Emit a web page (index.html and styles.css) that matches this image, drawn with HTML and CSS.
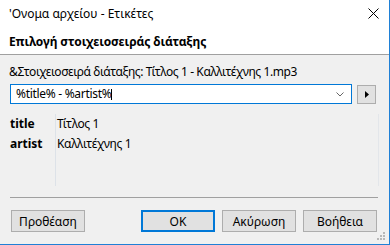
FILE: index.html
```html
<!DOCTYPE html>
<html lang="el">
<head>
    <meta charset="UTF-8">
    <title>Όνομα αρχείου - Ετικέτες</title>
    <link rel="stylesheet" href="styles.css">
</head>
<body>
    <div class="window">
        <div class="titlebar">
            <span class="title">'Ονομα αρχείου - Ετικέτες</span>
            <svg class="close" width="11" height="11" viewBox="0 0 11 11">
                <path d="M0.5 0.5 L10.5 10.5 M10.5 0.5 L0.5 10.5" stroke="#000" stroke-width="1" fill="none"/>
            </svg>
        </div>
        <div class="header">Επιλογή στοιχειοσειράς διάταξης</div>

        <div class="content">
            <div class="label">&amp;Στοιχειοσειρά διάταξης: Τίτλος 1 - Καλλιτέχνης 1.mp3</div>
            <div class="combo-row">
                <div class="combo">
                    <span class="combo-text">%title% - %artist%</span><span class="caret"></span>
                    <svg class="chevron" width="8" height="5" viewBox="0 0 8 5">
                        <path d="M0.5 0.5 L4 4 L7.5 0.5" stroke="#666" stroke-width="1" fill="none"/>
                    </svg>
                </div>
                <button class="arrow-btn">
                    <svg width="4" height="7" viewBox="0 0 4 7"><path d="M0 0 L4 3.5 L0 7 Z" fill="#000"/></svg>
                </button>
            </div>

            <div class="fields">
                <div class="field-names">
                    <div>title</div>
                    <div>artist</div>
                </div>
                <div class="field-values">
                    <div>Τίτλος 1</div>
                    <div>Καλλιτέχνης 1</div>
                </div>
            </div>

            <div class="sep"></div>

            <div class="buttons">
                <button class="btn">Προθέαση</button>
                <div class="btn-group">
                    <button class="btn default">OK</button>
                    <button class="btn">Ακύρωση</button>
                    <button class="btn">Βοήθεια</button>
                </div>
            </div>
        </div>

        <svg class="grip" width="9" height="9" viewBox="0 0 9 9">
            <rect x="6" y="0" width="2" height="2" fill="#b8b8b8"/>
            <rect x="3" y="3" width="2" height="2" fill="#b8b8b8"/>
            <rect x="6" y="3" width="2" height="2" fill="#b8b8b8"/>
            <rect x="0" y="6" width="2" height="2" fill="#b8b8b8"/>
            <rect x="3" y="6" width="2" height="2" fill="#b8b8b8"/>
            <rect x="6" y="6" width="2" height="2" fill="#b8b8b8"/>
        </svg>
    </div>
</body>
</html>
```

FILE: styles.css
```css
body {
    margin: 0;
    padding: 0;
    font-family: 'Noto Sans', 'DejaVu Sans', sans-serif;
    font-size: 12px;
    color: #000;
    background: #f0f0f0;
}

.window {
    position: relative;
    width: 390px;
    height: 245px;
    box-sizing: border-box;
    border-right: 1px solid #1f80d6;
    border-bottom: 1px solid #1f80d6;
    background-color: #f0f0f0;
    display: flex;
    flex-direction: column;
}

.titlebar {
    height: 28px;
    background-color: #fff;
    display: flex;
    align-items: center;
    justify-content: space-between;
    padding: 0 10px 0 9px;
}

.title {
    line-height: 28px;
}

.close {
    display: block;
    margin-top: -1px;
}

.header {
    background-color: #fff;
    font-weight: bold;
    line-height: 16px;
    padding: 6px 9px 4px;
    border-bottom: 1px solid #a0a0a0;
    letter-spacing: -0.1px;
}

.content {
    padding: 9px 0 0 10px;
}

.label {
    line-height: 16px;
    margin-left: -1px;
    letter-spacing: -0.4px;
}

.combo-row {
    display: flex;
    align-items: center;
    margin-top: 4px;
}

.combo {
    width: 342px;
    height: 20px;
    box-sizing: border-box;
    border: 1px solid #0078d7;
    background-color: #fff;
    display: flex;
    align-items: center;
    padding-left: 5px;
}

.combo-text {
    line-height: 16px;
    letter-spacing: -0.3px;
}

.caret {
    width: 1px;
    height: 11px;
    background-color: #000;
}

.chevron {
    margin-left: auto;
    margin-right: 7px;
}

.arrow-btn {
    width: 19px;
    height: 19px;
    margin-left: 5px;
    padding: 0;
    background-color: #e1e1e1;
    border: 1px solid #adadad;
    display: flex;
    align-items: center;
    justify-content: center;
}

.arrow-btn svg {
    display: block;
    margin-left: 1px;
}

.fields {
    display: flex;
    width: 368px;
    height: 72px;
    margin-top: 10px;
    border-right: 1px solid #e3e6ea;
    line-height: 20px;
}

.field-names {
    width: 45px;
    font-weight: bold;
    border-right: 1px solid #dde2e8;
}

.field-values {
    padding-left: 1px;
    letter-spacing: -0.35px;
}

.sep {
    width: 368px;
    height: 1px;
    margin-top: 11px;
    background-color: #a0a0a0;
}

.buttons {
    display: flex;
    justify-content: space-between;
    width: 366px;
    margin-top: 12px;
    margin-left: 1px;
}

.btn-group {
    display: flex;
    gap: 7px;
}

.btn {
    width: 74px;
    height: 22px;
    padding: 0;
    font-family: inherit;
    font-size: 12px;
    color: #000;
    background-color: #e1e1e1;
    border: 1px solid #adadad;
}

.btn.default {
    border: 2px solid #0078d7;
}

.grip {
    position: absolute;
    right: 3px;
    bottom: 3px;
}
```
